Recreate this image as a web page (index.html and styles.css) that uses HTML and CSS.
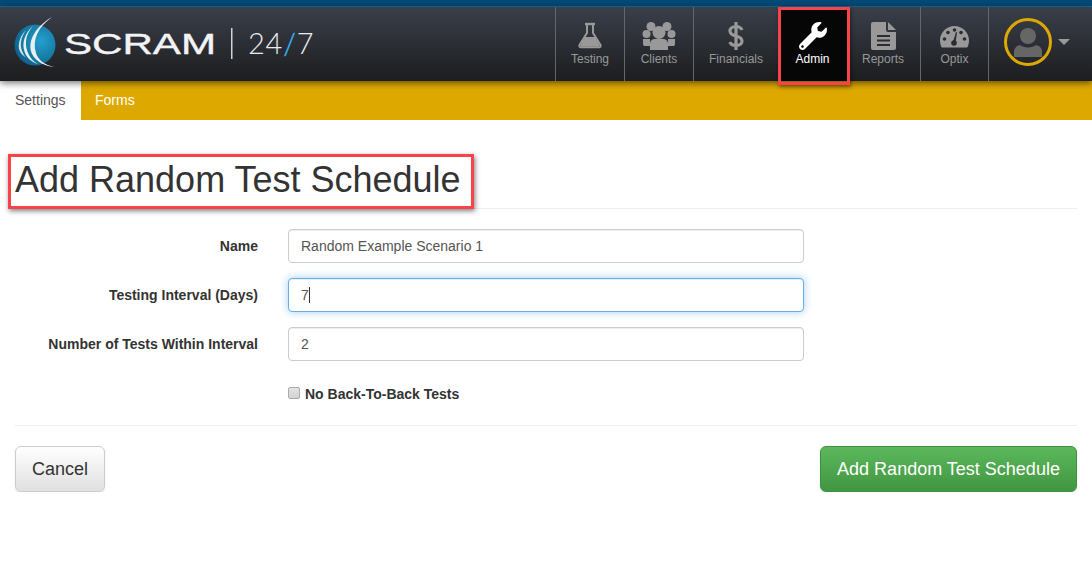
FILE: index.html
```html
<!DOCTYPE html>
<html lang="en">
<head>
    <meta charset="UTF-8">
    <title>Add Random Test Schedule</title>
    <link rel="stylesheet" href="styles.css">
</head>
<body>
    <div class="top-strip"></div>
    <header class="navbar">
        <svg class="logo" width="330" height="74" viewBox="0 0 330 74">
            <defs>
                <radialGradient id="sphere" cx="0.65" cy="0.4" r="0.75">
                    <stop offset="0" stop-color="#22a0cf"/>
                    <stop offset="0.65" stop-color="#14769f"/>
                    <stop offset="1" stop-color="#0d5680"/>
                </radialGradient>
            </defs>
            <circle cx="35" cy="38" r="20.5" fill="url(#sphere)"/>
            <path d="M52 10C38 20 32 33 36 46C38 53 45 58 54 60C45 59 36 55 32 47C26 33 38 18 52 10Z" fill="#e8eef2"/>
            <path d="M33 19C25 28 24 38 29 48C31 52 34 55 38 57C32 55 27 51 25 46C21 36 25 26 33 19Z" fill="#e8eef2"/>
            <path d="M26 23C21 30 19 38 23 46C24 48 25 50 27 51C23 49 20 46 19 42C18 35 21 28 26 23Z" fill="#d5e3ea"/>
            <text class="logo-word" x="64" y="47" textLength="152" lengthAdjust="spacingAndGlyphs">SCRAM</text>
            <rect x="231" y="21" width="1.5" height="31" fill="#cfd2d6"/>
            <text class="logo-hours" x="248" y="47">24<tspan class="logo-slash">/</tspan>7</text>
        </svg>
        <nav class="main-nav">
            <a class="nav-item w-testing">
                <svg class="nav-icon" width="26" height="28" viewBox="0 0 26 28">
                    <path d="M8 2h10" stroke="#999" stroke-width="2.4" fill="none"/>
                    <path d="M10 3v8L2.500 23a1.500 1.500 0 0 0 1.300 2.200h18.400a1.500 1.500 0 0 0 1.300-2.200L16 11V3" stroke="#999" stroke-width="2" fill="none"/>
                    <path d="M7.500 15h11L23 24.500H3Z" fill="#999"/>
                </svg>
                Testing
            </a>
            <a class="nav-item w-clients">
                <svg class="nav-icon" width="34" height="28" viewBox="0 0 34 28">
                    <g fill="#999">
                        <circle cx="9" cy="4.500" r="4.500"/>
                        <circle cx="25" cy="4.500" r="4.500"/>
                        <circle cx="4.500" cy="12" r="4"/>
                        <circle cx="29.500" cy="12" r="4"/>
                        <path d="M1 17h7v7H2.500Q1 24 1 22ZM33 17h-7v7h5.500Q33 24 33 22Z"/>
                        <circle cx="17" cy="10.500" r="6.500"/>
                        <path d="M8 22c0-4 3-5 5-5h8c2 0 5 1 5 5v6H8Z"/>
                    </g>
                </svg>
                Clients
            </a>
            <a class="nav-item w-financials">
                <svg class="nav-icon" width="16" height="28" viewBox="0 0 16 28">
                    <path d="M14 8C13 5.500 11 4.500 8 4.500 4.500 4.500 2 6.300 2 9s2.300 4 6 5 6 2.300 6 5-2.500 4.500-6 4.500c-3 0-5.200-1-6.200-3.500M8 0v28" stroke="#999" stroke-width="3.200" fill="none"/>
                </svg>
                Financials
            </a>
            <a class="nav-item w-admin is-active">
                <svg class="nav-icon" width="28" height="28" viewBox="0 0 512 512">
                    <path fill="#fff" d="M507.730 109.100c-2.240-9.030-13.540-12.090-20.120-5.510l-74.360 74.360-67.880-11.310-11.310-67.880 74.360-74.360c6.620-6.620 3.430-17.900-5.660-20.160-47.380-11.740-99.550.91-136.580 37.930-39.640 39.640-50.550 97.100-34.050 147.200L18.740 402.760c-24.990 24.990-24.990 65.510 0 90.500 24.990 24.990 65.510 24.990 90.500 0l213.210-213.210c50.120 16.710 107.470 5.680 147.370-34.220 37.070-37.070 49.700-89.320 37.910-136.730zM64 472c-13.250 0-24-10.750-24-24 0-13.260 10.750-24 24-24s24 10.740 24 24c0 13.250-10.750 24-24 24z"/>
                </svg>
                Admin
            </a>
            <a class="nav-item w-reports">
                <svg class="nav-icon" width="25" height="28" viewBox="0 0 25 28">
                    <path d="M2 0h13v8a2 2 0 0 0 2 2h8v16a2 2 0 0 1-2 2H2a2 2 0 0 1-2-2V2a2 2 0 0 1 2-2Z" fill="#999"/>
                    <path d="M17 0l8 8h-8Z" fill="#999"/>
                    <path d="M6 13h13v2H6ZM6 17.500h13v2H6ZM6 22h13v2H6Z" fill="#2a2c31"/>
                </svg>
                Reports
            </a>
            <a class="nav-item w-optix">
                <svg class="nav-icon" width="29" height="28" viewBox="0 0 29 28">
                    <path d="M14.500 4C6.500 4 0 10.500 0 18.500c0 2.500.6 5 1.800 7h25.400c1.200-2 1.800-4.500 1.800-7C29 10.500 22.500 4 14.500 4Z" fill="#999"/>
                    <g fill="#2a2c31">
                        <circle cx="14.500" cy="8" r="1.800"/>
                        <circle cx="8" cy="10.500" r="1.800"/>
                        <circle cx="21" cy="10.500" r="1.800"/>
                        <circle cx="4.500" cy="17" r="1.800"/>
                        <circle cx="24.500" cy="17" r="1.800"/>
                        <circle cx="14" cy="21" r="2.800"/>
                        <path d="M13 20l3-10 1 .3-1.500 10.700Z"/>
                    </g>
                </svg>
                Optix
            </a>
            <a class="nav-user">
                <span class="avatar">
                    <svg width="28" height="29" viewBox="0 0 28 29">
                        <circle cx="14" cy="8" r="8" fill="#666"/>
                        <path d="M0 29v-5c0-4 2-6 6-7 2 1.500 5 2.500 8 2.500s6-1 8-2.500c4 1 6 3 6 7v5Z" fill="#666"/>
                    </svg>
                </span>
                <span class="user-caret"></span>
            </a>
        </nav>
    </header>
    <div class="subnav">
        <a class="subnav-tab is-active">Settings</a>
        <a class="subnav-tab">Forms</a>
    </div>
    <main class="content">
        <div class="page-header">
            <h1 class="page-title">Add Random Test Schedule</h1>
        </div>
        <form class="schedule-form">
            <div class="form-row">
                <label class="form-label">Name</label>
                <input class="form-input" type="text" value="Random Example Scenario 1">
            </div>
            <div class="form-row">
                <label class="form-label">Testing Interval (Days)</label>
                <div class="caret-wrap">
                    <input class="form-input is-focused" type="text" value="7">
                </div>
            </div>
            <div class="form-row">
                <label class="form-label">Number of Tests Within Interval</label>
                <input class="form-input" type="text" value="2">
            </div>
            <div class="form-row check-row">
                <span></span>
                <label class="check-label"><input class="check-box" type="checkbox">No Back-To-Back Tests</label>
            </div>
            <div class="form-actions">
                <button class="btn btn-default" type="button">Cancel</button>
                <button class="btn btn-success" type="button">Add Random Test Schedule</button>
            </div>
        </form>
    </main>
</body>
</html>
```

FILE: styles.css
```css
* {
    box-sizing: border-box;
}

body {
    margin: 0;
    background: #fff;
    color: #333;
    font-family: "Liberation Sans", Arial, sans-serif;
    font-size: 14px;
    overflow: hidden;
}

.top-strip {
    height: 7px;
    background: #004a75;
    border-bottom: 1px solid #0f6fa5;
}

.navbar {
    position: relative;
    z-index: 2;
    display: flex;
    justify-content: space-between;
    height: 74px;
    background: linear-gradient(#3a3f4a, #1c1d1f);
    box-shadow: 0 2px 7px rgba(0, 0, 0, 0.55);
}

.logo {
    display: block;
}

.logo-word {
    fill: #f2f3f4;
    stroke: #f2f3f4;
    stroke-width: 0.4px;
    font-family: "Liberation Sans", sans-serif;
    font-size: 30px;
}

.logo-hours {
    fill: #e9ebed;
    font-family: Lato, sans-serif;
    font-weight: 300;
    font-size: 29px;
    letter-spacing: 0.800px;
}

.logo-slash {
    fill: #35b5f0;
    stroke: #35b5f0;
    stroke-width: 0.4px;
}

.main-nav {
    display: flex;
}

.nav-item {
    position: relative;
    display: flex;
    flex-direction: column;
    align-items: center;
    height: 74px;
    padding-top: 15px;
    border-left: 1px solid #64666a;
    color: #999;
    font-size: 12px;
    line-height: 14px;
}

.nav-icon {
    display: block;
    height: 28px;
    margin-bottom: 2px;
}

.w-testing { width: 69px; }
.w-clients { width: 69px; }
.w-financials { width: 85px; }
.w-admin { width: 71px; padding-right: 2px; }
.w-reports { width: 71px; padding-right: 3px; border-left: 0; }
.w-optix { width: 68px; }

.is-active.nav-item {
    border-left: 0;
    background: #060606;
    color: #fff;
}

/* red annotation around the active item */
.is-active.nav-item::after {
    content: "";
    position: absolute;
    left: 0;
    right: -1px;
    top: 0;
    bottom: -4px;
    border: 3px solid #f9424a;
    box-shadow: 1px 2px 4px rgba(0, 0, 0, 0.45);
}

.nav-user {
    display: flex;
    align-items: center;
    gap: 6px;
    width: 104px;
    height: 74px;
    padding: 0 0 4px 15px;
    border-left: 1px solid #64666a;
}

.avatar {
    display: flex;
    align-items: center;
    justify-content: center;
    width: 48px;
    height: 48px;
    border: 3px solid #dda900;
    border-radius: 50%;
}

.user-caret {
    width: 0;
    height: 0;
    border-left: 6px solid transparent;
    border-right: 6px solid transparent;
    border-top: 6px solid #999;
}

.subnav {
    display: flex;
    height: 39px;
    background: #dda900;
}

.subnav-tab {
    padding: 0 14px;
    color: #fff;
    line-height: 39px;
}

.subnav-tab.is-active {
    width: 81px;
    padding: 0 15px;
    background: #fff;
    color: #555;
}

.content {
    padding: 0 15px;
}

.page-header {
    height: 89px;
    padding-top: 40px;
    border-bottom: 1px solid #eee;
}

.page-title {
    position: relative;
    display: inline-block;
    margin: 0;
    font-size: 36px;
    font-weight: 500;
    line-height: 40px;
}

/* red annotation around the title */
.page-title::after {
    content: "";
    position: absolute;
    left: -7px;
    right: -13px;
    top: -6px;
    bottom: -9px;
    border: 3px solid #f9424a;
    box-shadow: 1px 2px 5px rgba(0, 0, 0, 0.5);
}

.schedule-form {
    padding-top: 20px;
}

.form-row {
    display: grid;
    grid-template-columns: 243px 516px;
    column-gap: 30px;
    align-items: center;
    margin-bottom: 15px;
}

.form-label {
    font-size: 14px;
    font-weight: bold;
    text-align: right;
}

.form-input {
    display: block;
    width: 100%;
    height: 34px;
    padding: 6px 12px;
    border: 1px solid #ccc;
    border-radius: 4px;
    box-shadow: inset 0 1px 1px rgba(0, 0, 0, 0.075);
    color: #555;
    font-family: inherit;
    font-size: 14px;
}

.form-input.is-focused {
    border-color: #66afe9;
    box-shadow: inset 0 1px 1px rgba(0, 0, 0, 0.075), 0 0 8px rgba(102, 175, 233, 0.6);
}

.caret-wrap {
    position: relative;
}

.caret-wrap::after {
    content: "";
    position: absolute;
    left: 21px;
    top: 9px;
    width: 1px;
    height: 16px;
    background: #333;
}

.check-row {
    align-items: start;
    height: 49px;
    margin-bottom: 0;
    padding-top: 8px;
}

.check-label {
    display: flex;
    align-items: center;
    height: 20px;
    font-weight: bold;
}

.check-box {
    appearance: none;
    width: 12px;
    height: 12px;
    margin: 0 5px 2px 0;
    border: 1px solid #aaa;
    border-radius: 2px;
    background: linear-gradient(#e4e4e4, #d2d2d2);
}

.form-actions {
    display: flex;
    justify-content: space-between;
    padding-top: 20px;
    border-top: 1px solid #eee;
}

.btn {
    height: 46px;
    padding: 0 16px;
    border: 1px solid;
    border-radius: 6px;
    font-family: inherit;
    font-size: 18px;
    box-shadow: 0 1px 2px rgba(0, 0, 0, 0.1);
}

.btn-default {
    width: 90px;
    border-color: #ccc;
    background: linear-gradient(#fff, #e0e0e0);
    color: #333;
}

.btn-success {
    width: 257px;
    border-color: #3e8f3e;
    background: linear-gradient(#5cb85c, #419641);
    color: #fff;
}
```
